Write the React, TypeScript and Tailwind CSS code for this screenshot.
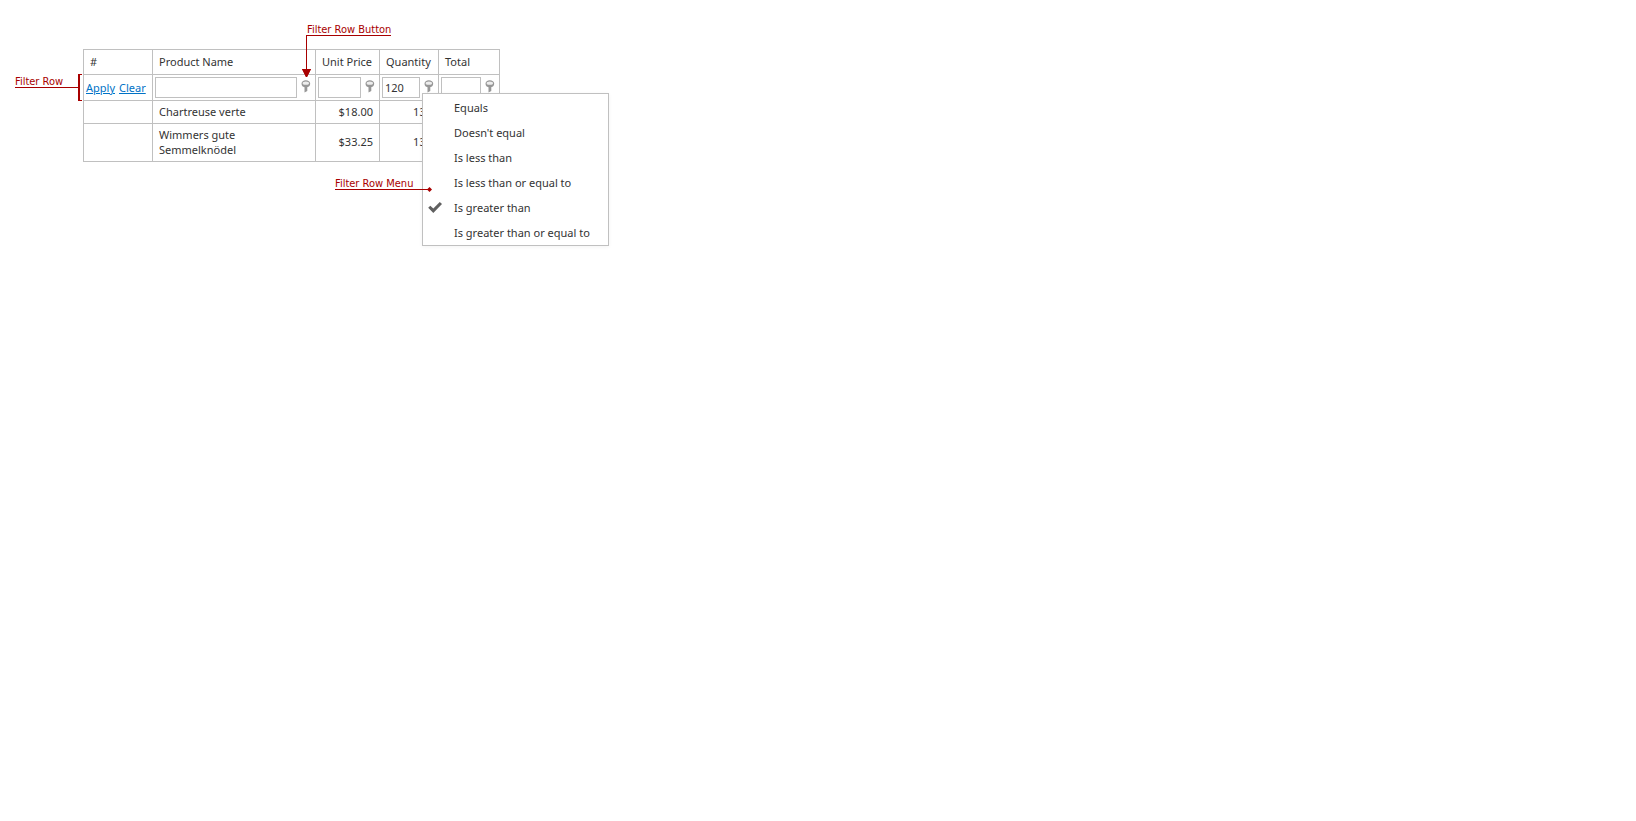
import type { ReactNode } from "react";
import clsx from "clsx";

const PRODUCTS = [
    { name: "Chartreuse verte", price: "$18.00", quantity: "130", height: "h-[23px]" },
    { name: "Wimmers gute Semmelknödel", price: "$33.25", quantity: "130", height: "h-[38px]" },
];

const CONDITIONS = [
    "Equals",
    "Doesn't equal",
    "Is less than",
    "Is less than or equal to",
    "Is greater than",
    "Is greater than or equal to",
];

const CELL = "border-r border-b border-[#c0c0c0]";

const PinIcon = () => (
    <svg width="10" height="13" viewBox="0 0 10 13" aria-hidden="true">
        <path d="M0.5 3.8C0.5 1.6 2.4 0.3 4.8 0.3s4.4 1.3 4.4 3.5S7.4 7.4 4.8 7.4 0.5 6 0.5 3.8Z" fill="#979797" />
        <ellipse cx="4.8" cy="3.2" rx="3.2" ry="1.6" fill="#ededed" />
        <path d="M3.5 6h2.8v5L3.5 12.6Z" fill="#979797" />
    </svg>
);

const CheckIcon = () => (
    <svg width="14" height="11" viewBox="0 0 14 11" aria-hidden="true">
        <path d="M0.2 5.8 2.3 3.7 5.3 6.5 11.8 0 14 2 5.3 11Z" fill="#606060" />
    </svg>
);

const ConditionMenu = ({ selected }: { selected: string }) => (
    <div
        role="menu"
        aria-label="Filter condition"
        className="absolute top-[18px] left-[42px] z-10 flex w-[187px] flex-col border border-[#c0c0c0] bg-white pt-px shadow-[0_1px_4px_rgba(0,0,0,0.05)]"
    >
        {CONDITIONS.map((label) => (
            <button
                key={label}
                type="button"
                role="menuitemradio"
                aria-checked={label === selected}
                className="flex h-[25px] items-center text-left whitespace-nowrap"
            >
                <span className="w-[31px] shrink-0 pl-[5px]">{label === selected && <CheckIcon />}</span>
                {label}
            </button>
        ))}
    </div>
);

const FilterCell = ({ field, value, children }: { field: string; value?: string; children?: ReactNode }) => (
    <td className={clsx(CELL, "p-0")}>
        <div className="relative flex py-[2px] pl-[2px]">
            <input
                type="text"
                aria-label={`Filter by ${field}`}
                defaultValue={value}
                className="h-[21px] min-w-0 flex-1 border border-[#c0c0c0] px-[2px] outline-none"
            />
            <button type="button" aria-label={`${field} condition`} className="flex w-[18px] items-center justify-center pb-[2px]">
                <PinIcon />
            </button>
            {children}
        </div>
    </td>
);

const Callout = ({ className, children }: { className: string; children: ReactNode }) => (
    <span className={clsx("absolute z-20 h-[13px] border-b border-[#a80000] text-[11px] leading-[14px] whitespace-nowrap text-[#a80000] font-['DejaVu_Sans_Condensed','Liberation_Sans',sans-serif]", className)}>
        {children}
    </span>
);

export default function App() {
    return (
        <main className="min-h-screen bg-white pt-[49px] pl-[83px] font-['Noto_Sans','Open_Sans',sans-serif] text-[11px] leading-[15px] text-[#333333]">
            <div className="relative w-fit">
                <table className="w-[417px] table-fixed border-separate border-spacing-0 border-t border-l border-[#c0c0c0]">
                    <colgroup>
                        <col className="w-[69px]" />
                        <col className="w-[163px]" />
                        <col className="w-[64px]" />
                        <col className="w-[59px]" />
                        <col className="w-[61px]" />
                    </colgroup>
                    <thead>
                        <tr className="h-[25px] text-left">
                            {["#", "Product Name", "Unit Price", "Quantity", "Total"].map((title) => (
                                <th key={title} scope="col" className={clsx(CELL, "px-[6px] pt-0 pb-[2px] font-normal whitespace-nowrap")}>
                                    {title}
                                </th>
                            ))}
                        </tr>
                    </thead>
                    <tbody>
                        <tr>
                            <td className={clsx(CELL, "py-0 pr-0 pl-[2px] whitespace-nowrap")}>
                                <div className="flex gap-1">
                                    <a href="#apply" className="text-[#0072c6] underline">Apply</a>
                                    <a href="#clear" className="text-[#0072c6] underline">Clear</a>
                                </div>
                            </td>
                            <FilterCell field="Product Name" />
                            <FilterCell field="Unit Price" />
                            <FilterCell field="Quantity" value="120">
                                <ConditionMenu selected="Is greater than" />
                            </FilterCell>
                            <FilterCell field="Total" />
                        </tr>
                        {PRODUCTS.map((product) => (
                            <tr key={product.name} className={product.height}>
                                <td className={CELL} />
                                <td className={clsx(CELL, "pt-0 pr-[60px] pb-[2px] pl-[6px]")}>{product.name}</td>
                                <td className={clsx(CELL, "px-[6px] pt-0 pb-[2px] text-right")}>{product.price}</td>
                                <td className={clsx(CELL, "px-[6px] pt-0 pb-[2px] text-right")}>{product.quantity}</td>
                                <td className={CELL} />
                            </tr>
                        ))}
                    </tbody>
                </table>

                <Callout className="top-[26px] left-[-68px] w-[64px]">Filter Row</Callout>
                <span className="absolute top-[25px] left-[-5px] h-[27px] w-[4px] border-y border-l-2 border-[#a80000]" />

                <Callout className="top-[-26px] left-[223px] pl-px">Filter Row Button</Callout>
                <svg width="9" height="42" viewBox="0 0 9 42" aria-hidden="true" className="absolute top-[-14px] left-[219px] z-20">
                    <path d="M4 0H5V34H9L5 42H4L0 34H4Z" fill="#a80000" />
                    <path d="M0 34H9L5 42H4Z" fill="#a80000" />
                </svg>

                <Callout className="top-[128px] left-[252px] w-[93px]">Filter Row Menu</Callout>
                <svg width="5" height="5" viewBox="0 0 5 5" aria-hidden="true" className="absolute top-[138px] left-[344px] z-20">
                    <path d="M2.5 0 5 2.5 2.5 5 0 2.5Z" fill="#a80000" />
                </svg>
            </div>
        </main>
    );
}
